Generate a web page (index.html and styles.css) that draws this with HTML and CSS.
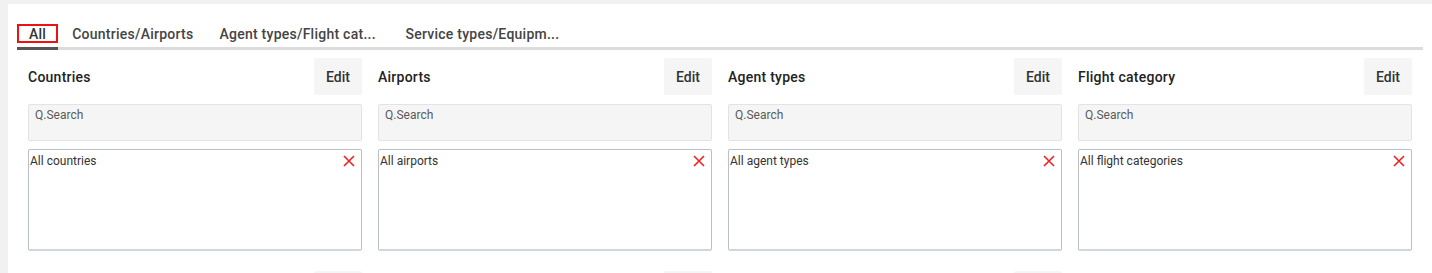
FILE: index.html
```html
<!DOCTYPE html>
<html lang="en">
<head>
<meta charset="utf-8">
<title>Filters</title>
<link rel="stylesheet" href="styles.css">
</head>
<body>
<div class="panel">
  <div class="tabs">
    <div class="tab active"><span class="tab-label focused">All</span></div>
    <div class="tab"><span class="tab-label">Countries/Airports</span></div>
    <div class="tab tab-fixed"><span class="tab-label">Agent types/Flight cat...</span></div>
    <div class="tab tab-fixed"><span class="tab-label">Service types/Equipm...</span></div>
  </div>
  <div class="grid">
    <section class="card">
      <div class="card-head"><h3 class="card-title">Countries</h3><button class="edit-btn">Edit</button></div>
      <div class="search">Q.Search</div>
      <div class="list"><span class="list-item">All countries</span><svg class="remove" viewBox="0 0 12 12" width="12" height="12"><path d="M1 1L11 11M11 1L1 11"/></svg></div>
    </section>
    <section class="card">
      <div class="card-head"><h3 class="card-title">Airports</h3><button class="edit-btn">Edit</button></div>
      <div class="search">Q.Search</div>
      <div class="list"><span class="list-item">All airports</span><svg class="remove" viewBox="0 0 12 12" width="12" height="12"><path d="M1 1L11 11M11 1L1 11"/></svg></div>
    </section>
    <section class="card">
      <div class="card-head"><h3 class="card-title">Agent types</h3><button class="edit-btn">Edit</button></div>
      <div class="search">Q.Search</div>
      <div class="list"><span class="list-item">All agent types</span><svg class="remove" viewBox="0 0 12 12" width="12" height="12"><path d="M1 1L11 11M11 1L1 11"/></svg></div>
    </section>
    <section class="card">
      <div class="card-head"><h3 class="card-title">Flight category</h3><button class="edit-btn">Edit</button></div>
      <div class="search">Q.Search</div>
      <div class="list"><span class="list-item">All flight categories</span><svg class="remove" viewBox="0 0 12 12" width="12" height="12"><path d="M1 1L11 11M11 1L1 11"/></svg></div>
    </section>
    <section class="card">
      <div class="card-head"><span class="card-title"></span><span class="edit-btn"></span></div>
    </section>
    <section class="card">
      <div class="card-head"><span class="card-title"></span><span class="edit-btn"></span></div>
    </section>
    <section class="card">
      <div class="card-head"><span class="card-title"></span><span class="edit-btn"></span></div>
    </section>
  </div>
</div>
</body>
</html>
```
FILE: styles.css
```css
* { box-sizing: border-box; }
html, body { margin: 0; padding: 0; }
body {
  background: #f1f1f1;
  font-family: Roboto, "Liberation Sans", Arial, sans-serif;
  color: #333;
  padding: 4px 0 0 8px;
  overflow: hidden;
}
.panel {
  background: #fff;
  padding: 20px 9px 40px 9px;
  min-height: 400px;
}
.tabs {
  display: flex;
  border-bottom: 3px solid #dcdcdc;
  height: 26px;
}
.tab {
  padding-bottom: 4px;
  margin-right: 2px;
  font-size: 14px;
  font-weight: 500;
  letter-spacing: 0.25px;
  color: #444;
  white-space: nowrap;
}
.tab-label {
  display: block;
  height: 19px;
  line-height: 16px;
  padding: 0 10px;
  border: 2px solid transparent;
}
.tab.active {
  border-bottom: 3px solid #555;
  margin-bottom: -3px;
}
.tab-label.focused {
  border-color: #ee1111;
  color: #333;
}
.tab-fixed { width: 184px; overflow: hidden; }
.grid {
  display: grid;
  grid-template-columns: repeat(4, 334px);
  column-gap: 16px;
  row-gap: 20px;
  padding: 8px 11px 0 11px;
}
.card { display: flex; flex-direction: column; }
.card-head {
  display: flex;
  align-items: center;
  justify-content: space-between;
  height: 37px;
}
.card-title {
  margin: 0;
  font-size: 14px;
  font-weight: 500;
  letter-spacing: 0.25px;
  color: #222;
}
.edit-btn {
  display: block;
  width: 48px;
  height: 37px;
  border: 0;
  background: #f5f5f5;
  font-family: inherit;
  font-size: 14px;
  font-weight: 500;
  color: #333;
  padding: 0;
  border-radius: 2px;
}
.search {
  margin-top: 9px;
  height: 37px;
  background: #f5f5f5;
  border: 1px solid #e3e3e3;
  border-radius: 2px;
  padding: 3px 6px;
  font-size: 12px;
  color: #5a5a5a;
  line-height: 14px;
}
.list {
  margin-top: 8px;
  height: 102px;
  border: 1px solid #b9c0c7;
  border-bottom: 2px solid #cfd6dc;
  border-radius: 2px;
  padding: 4px 6px 0 1px;
  display: flex;
  justify-content: space-between;
  align-items: flex-start;
}
.list-item {
  font-size: 12px;
  color: #333;
  line-height: 15px;
}
.remove {
  margin-top: 1px;
  fill: none;
  stroke: #f02020;
  stroke-width: 1.6;
}
```
